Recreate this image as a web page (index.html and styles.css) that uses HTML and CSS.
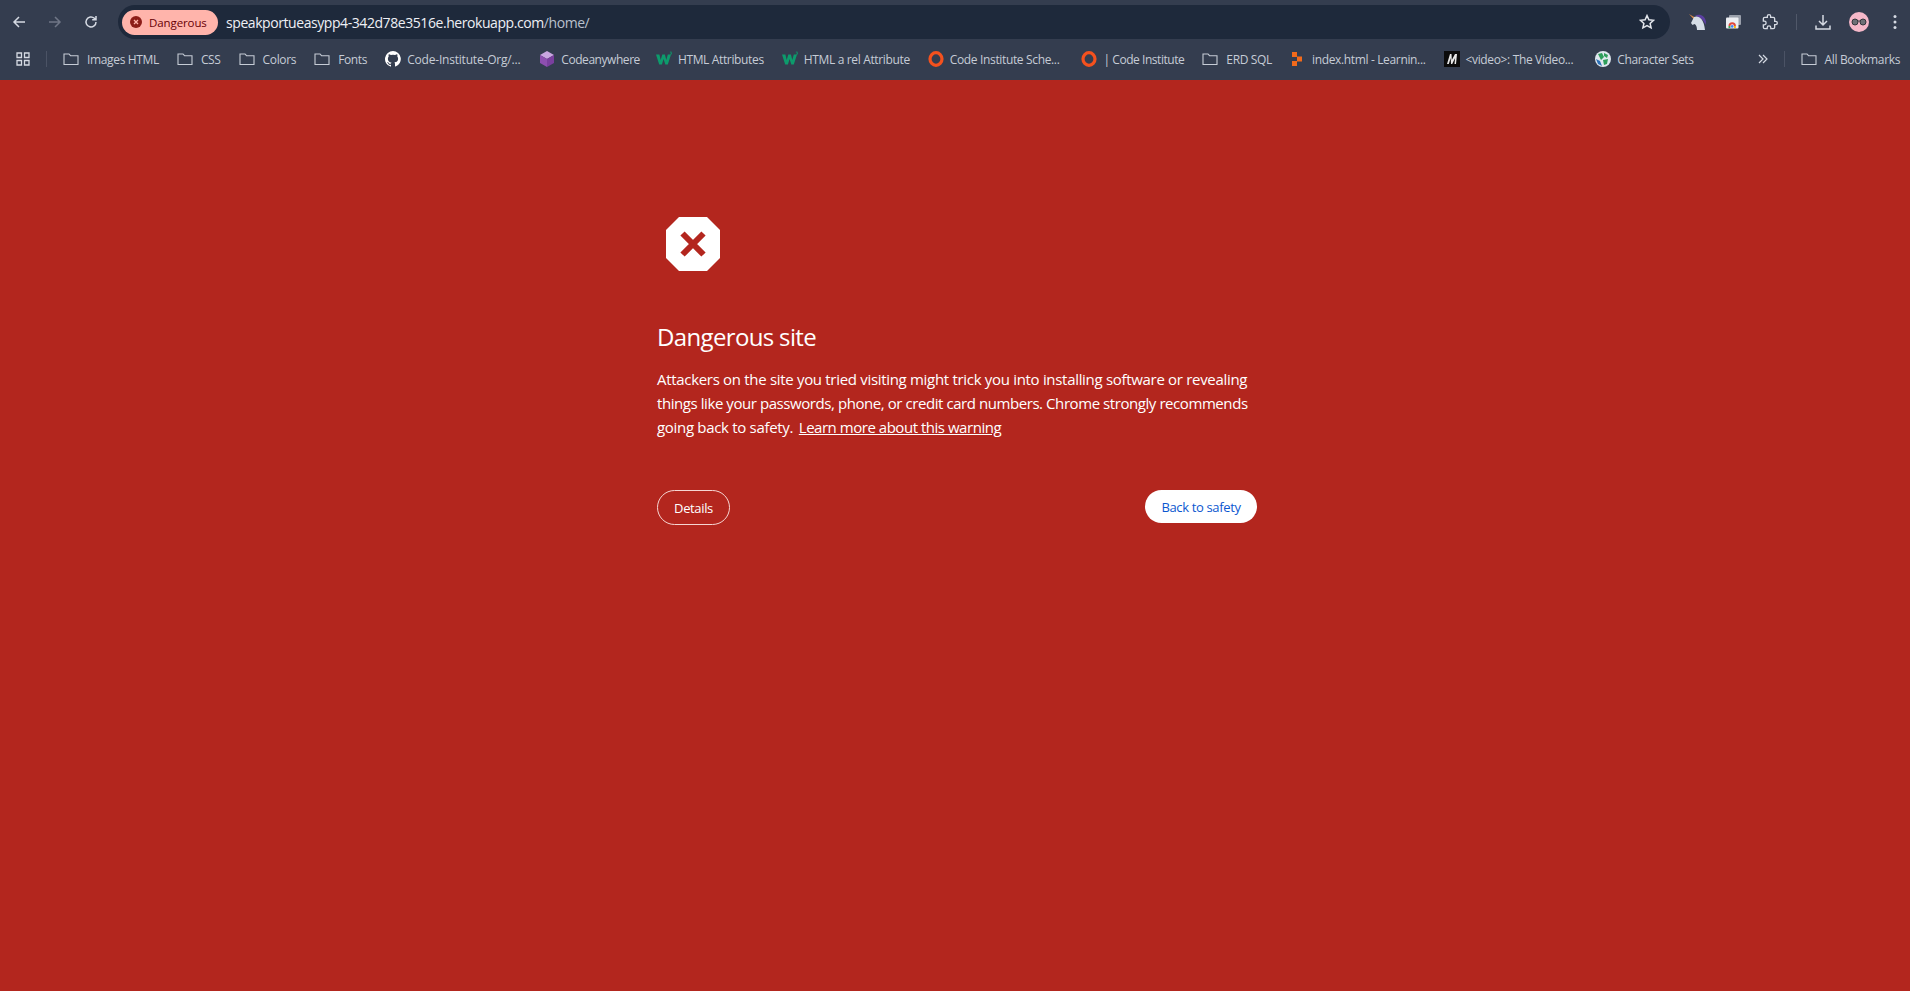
FILE: index.html

```html
<!DOCTYPE html>
<html lang="en">
<head>
    <meta charset="UTF-8">
    <meta name="viewport" content="width=device-width, initial-scale=1.0">
    <title>Security error</title>
    <link rel="stylesheet" href="styles.css">
</head>
<body>
    <header class="browser">
        <div class="toolbar">
            <svg class="nav-icon" viewBox="0 0 16 16"><path d="M14 8H3M8 3L3 8l5 5"/></svg>
            <svg class="nav-icon nav-off" viewBox="0 0 16 16"><path d="M2 8h11M8 3l5 5-5 5"/></svg>
            <svg class="nav-icon" viewBox="0 0 16 16"><path d="M13 8a5 5 0 1 1-1.600-3.700L13 5.800M13 2v3.800H9.200"/></svg>
            <div class="omnibox">
                <span class="danger-chip">
                    <svg class="chip-icon" viewBox="0 0 12 12"><circle cx="6" cy="6" r="6"/><path d="M4 4l4 4M8 4l-4 4"/></svg>
                    Dangerous
                </span>
                <span class="url">speakportueasypp4-342d78e3516e.herokuapp.com<span class="url-path">/home/</span></span>
                <svg class="star" viewBox="0 0 16 16"><path d="M8 1.600l1.900 4.200 4.600.5-3.400 3.100 1 4.500L8 11.600l-4.100 2.300 1-4.500-3.400-3.100 4.600-.5z"/></svg>
            </div>
            <div class="ext-icons">
                <svg class="ext ext-unicorn" viewBox="0 0 17 17"><path class="uni-horn" d="M0 1l6 3.500-1.500 1.500z"/><path class="uni-mane" d="M6 3C10 .5 16 2 17 9l-.5 3C15 7 11 4 6 3z"/><path class="uni-head" d="M5 4c4-2 10 1 11 13H8c0-3-1-5.500-2.500-6l-2 1L2 10z"/></svg>
                <svg class="ext ext-tab" viewBox="0 0 15 15"><rect class="tab-back" x="3" y="1" width="12" height="10" rx="1"/><rect class="tab-front" x="0" y="3.500" width="12.500" height="11" rx="1"/><path class="c-red" d="M2.500 12a3.700 3.700 0 0 1 7.400 0H8a1.800 1.800 0 0 0-3.600 0z"/><path class="c-green" d="M2.500 12h1.900v2H2.500z"/><path class="c-yellow" d="M8 12h1.900v2H8z"/><circle class="c-blue" cx="6.200" cy="12.400" r="1.300"/></svg>
                <svg class="nav-icon ext-puzzle" viewBox="0 0 24 24"><path d="M20.500 11H19V7c0-1.100-.9-2-2-2h-4V3.500C13 2.120 11.880 1 10.500 1S8 2.120 8 3.500V5H4c-1.100 0-1.990.9-1.990 2v3.800H3.500c1.490 0 2.700 1.210 2.700 2.700s-1.210 2.700-2.700 2.700H2V20c0 1.100.9 2 2 2h3.800v-1.500c0-1.490 1.210-2.700 2.700-2.700s2.700 1.210 2.700 2.700V22H17c1.100 0 2-.9 2-2v-4h1.500c1.380 0 2.500-1.120 2.500-2.500S21.880 11 20.500 11z"/></svg>
                <span class="sep"></span>
                <svg class="nav-icon ext-down" viewBox="0 0 16 16"><path d="M8 1v10M4 7l4 4 4-4M1 11.500V15h14v-3.500"/></svg>
                <svg class="avatar" viewBox="0 0 20 20"><circle class="av-face" cx="10" cy="10" r="10"/><circle class="av-lens" cx="6" cy="10" r="3"/><circle class="av-lens" cx="14" cy="10" r="3"/><path class="av-bridge" d="M9 9h2"/></svg>
                <svg class="menu-dots" viewBox="0 0 4 16"><circle cx="2" cy="2.500" r="1.500"/><circle cx="2" cy="8" r="1.500"/><circle cx="2" cy="13.500" r="1.500"/></svg>
            </div>
        </div>
        <nav class="bookmarks">
            <svg class="apps" viewBox="0 0 14 14"><path d="M1 1h4.500v4.500H1zM8.500 1H13v4.500H8.500zM1 8.500h4.500V13H1zM8.500 8.500H13V13H8.500z"/></svg>
            <span class="bar-sep"></span>
            <a class="mark folder-mark"><svg class="folder" viewBox="0 0 16 14"><path d="M1 12.500V2h5l1.500 1.700H15v8.800z"/></svg>Images HTML</a>
            <a class="mark folder-mark"><svg class="folder" viewBox="0 0 16 14"><path d="M1 12.500V2h5l1.500 1.700H15v8.800z"/></svg>CSS</a>
            <a class="mark folder-mark"><svg class="folder" viewBox="0 0 16 14"><path d="M1 12.500V2h5l1.500 1.700H15v8.800z"/></svg>Colors</a>
            <a class="mark folder-mark"><svg class="folder" viewBox="0 0 16 14"><path d="M1 12.500V2h5l1.500 1.700H15v8.800z"/></svg>Fonts</a>
            <a class="mark mark-github"><svg class="fav" viewBox="0 0 16 16"><path class="gh" d="M8 0a8 8 0 0 0-2.500 15.600c.4.100.5-.2.500-.4v-1.400c-2.200.5-2.700-1-2.700-1-.4-.9-.9-1.200-.9-1.200-.7-.5.100-.5.100-.5.800.1 1.200.8 1.200.8.700 1.200 1.900.9 2.300.7.100-.5.300-.9.500-1.100-1.800-.2-3.600-.9-3.600-4 0-.9.300-1.600.8-2.100-.1-.2-.4-1 .1-2.100 0 0 .7-.2 2.200.8a7.600 7.600 0 0 1 4 0c1.500-1 2.200-.8 2.200-.8.400 1.100.2 1.900.1 2.100.5.600.8 1.300.8 2.100 0 3.100-1.900 3.700-3.700 3.900.3.300.6.800.6 1.500v2.200c0 .2.100.5.600.4A8 8 0 0 0 8 0z"/></svg>Code-Institute-Org/...</a>
            <a class="mark mark-narrow mark-close"><svg class="fav" viewBox="0 0 16 16"><path class="cube-top" d="M8 0l7 4-7 4-7-4z"/><path class="cube-left" d="M1 4l7 4v8l-7-4z"/><path class="cube-right" d="M15 4l-7 4v8l7-4z"/></svg>Codeanywhere</a>
            <a class="mark"><svg class="fav" viewBox="0 0 16 16"><path class="w3" d="M0 3.500h3.400l1.300 5.500 1.600-5.500h2.600l1.400 5.500 1.500-5.500H15l-3.200 10H9.300L7.600 8l-1.700 5.500H3.200z"/><path class="w3-mark" d="M13.800 1h1.700l-.8 1h.8v1.200h-1.700"/></svg>HTML Attributes</a>
            <a class="mark"><svg class="fav" viewBox="0 0 16 16"><path class="w3" d="M0 3.500h3.400l1.300 5.500 1.600-5.500h2.600l1.400 5.500 1.500-5.500H15l-3.200 10H9.300L7.600 8l-1.700 5.500H3.200z"/><path class="w3-mark" d="M13.800 1h1.700l-.8 1h.8v1.200h-1.700"/></svg>HTML a rel Attribute</a>
            <a class="mark mark-wide"><svg class="fav" viewBox="0 0 16 16"><ellipse class="ci" cx="8" cy="8" rx="6" ry="6.300"/></svg>Code Institute Sche...</a>
            <a class="mark mark-narrow"><svg class="fav" viewBox="0 0 16 16"><ellipse class="ci" cx="8" cy="8" rx="6" ry="6.300"/></svg>| Code Institute</a>
            <a class="mark folder-mark"><svg class="folder" viewBox="0 0 16 14"><path d="M1 12.500V2h5l1.500 1.700H15v8.800z"/></svg>ERD SQL</a>
            <a class="mark"><svg class="fav" viewBox="0 0 16 16"><path class="mdn" d="M2 1h5v5H2zM7 5.500h5v5H7zM2 10h5v5H2z"/></svg>index.html - Learnin...</a>
            <a class="mark mark-wide"><svg class="fav" viewBox="0 0 16 16"><rect class="mdn-bg" width="16" height="16"/><path class="mdn-m" d="M3 13L6 3h1.500l.3 6L11 3h2l-1 10h-1.500l.6-6-2.900 6H7l-.3-6-1.900 6z"/></svg>&lt;video&gt;: The Video...</a>
            <a class="mark"><svg class="fav" viewBox="0 0 16 16"><circle class="globe" cx="8" cy="8" r="8"/><path class="globe-land" d="M3 3l4-1 2 4-3 3zM9 2l4 2-1 3-3-2zM8 9l5-1-1 5-3 1z"/><path class="globe-sea" d="M1 8l4 2 2 5-4-2z"/></svg>Character Sets</a>
            <svg class="chevrons" viewBox="0 0 10 10"><path d="M1 1l4 4-4 4M5 1l4 4-4 4"/></svg>
            <span class="bar-sep"></span>
            <a class="mark all-marks"><svg class="folder" viewBox="0 0 16 14"><path d="M1 12.500V2h5l1.500 1.700H15v8.800z"/></svg>All Bookmarks</a>
        </nav>
    </header>

    <main class="interstitial">
        <svg class="stop-icon" viewBox="0 0 54 54"><path class="stop-shape" d="M13 0h28l13 13v28L41 54H13L0 41V13z"/><path class="stop-x" d="M16.500 16.500l21 21M37.500 16.500l-21 21"/></svg>
        <h1>Dangerous site</h1>
        <p>
            <span class="line line-first">Attackers on the site you tried visiting might trick you into installing software or revealing</span>
            <span class="line line-second">things like your passwords, phone, or credit card numbers. Chrome strongly recommends</span>
            <span class="line line-first">going back to safety. <a href="#" class="learn">Learn more about this warning</a></span>
        </p>
        <div class="actions">
            <button class="btn-details">Details</button>
            <button class="btn-back">Back to safety</button>
        </div>
    </main>
</body>
</html>
```

FILE: styles.css

```css
* {
    box-sizing: border-box;
}
html, body {
    height: 100%;
}
body {
    margin: 0;
    background-color: #b3261e;
    color: white;
    font-family: "Open Sans", "Noto Sans", sans-serif;
    overflow: hidden;
}
svg {
    flex: none;
    display: block;
}

/* browser chrome */
.browser {
    height: 80px;
    background-color: #343d4f;
    display: flex;
    flex-direction: column;
}
.toolbar {
    height: 44px;
    padding: 5px 0 0 11px;
    display: flex;
    align-items: flex-start;
}
.nav-icon {
    width: 16px;
    height: 16px;
    margin: 9px 20px 0 0;
    fill: none;
    stroke: #d5dae3;
    stroke-width: 1.500;
}
.nav-off {
    stroke: #6f7686;
}
.omnibox {
    width: 1552px;
    height: 34px;
    margin-left: -1px;
    padding: 0 15px 0 4px;
    border-radius: 17px;
    background-color: #1e293b;
    display: flex;
    align-items: center;
}
.danger-chip {
    width: 96px;
    height: 25px;
    border-radius: 12.500px;
    background-color: #ffb4ab;
    color: #690005;
    font-size: 11.500px;
    letter-spacing: -0.100px;
    padding-left: 8px;
    display: flex;
    align-items: center;
    gap: 7px;
}
.chip-icon {
    width: 12px;
    height: 12px;
    fill: #8c1d18;
    stroke: #ffb4ab;
    stroke-width: 1.300;
}
.chip-icon circle {
    stroke: none;
}
.url {
    margin-left: 8px;
    flex: 1;
    font-size: 14px;
    letter-spacing: -0.430px;
    color: #eef0f5;
}
.url-path {
    color: #b9c0cd;
}
.star {
    width: 16px;
    height: 16px;
    fill: none;
    stroke: #e3e6ec;
    stroke-width: 1.500;
}
.ext-icons {
    margin-left: 19px;
    display: flex;
    align-items: flex-start;
}
.ext {
    margin-top: 8px;
}
.ext-unicorn {
    width: 17px;
    height: 17px;
    margin-right: 20px;
}
.ext-tab {
    width: 15px;
    height: 15px;
    margin-top: 9px;
    margin-right: 21px;
}
.ext-puzzle {
    stroke-width: 2;
    margin-right: 18px;
}
.ext-down {
    margin-right: 18px;
}
.uni-horn { fill: #d98a4a; }
.uni-mane { fill: #5b3fa0; }
.uni-head { fill: #d5dde6; }
.tab-back { fill: #9aa0ab; }
.tab-front { fill: #eceef2; }
.c-red { fill: #e0483c; }
.c-green { fill: #34a853; }
.c-yellow { fill: #fbbc05; }
.c-blue { fill: #4285f4; }
.sep {
    width: 1px;
    height: 16px;
    margin: 9px 18px 0 0;
    background-color: #505869;
}
.avatar {
    width: 20px;
    height: 20px;
    margin: 7px 24px 0 0;
}
.av-face { fill: #f5b8c9; }
.av-lens {
    fill: #6d7076;
    stroke: #33363c;
    stroke-width: 1;
}
.av-bridge {
    fill: none;
    stroke: #33363c;
    stroke-width: 1;
}
.menu-dots {
    width: 4px;
    height: 16px;
    margin-top: 9px;
    fill: #d5dae3;
}

/* bookmarks bar */
.bookmarks {
    height: 36px;
    padding: 0 0 6px 16px;
    display: flex;
    align-items: center;
    font-size: 12px;
    letter-spacing: -0.350px;
    color: #c6ccd6;
    white-space: nowrap;
}
.apps {
    width: 14px;
    height: 14px;
    fill: none;
    stroke: #d5dae3;
    stroke-width: 1.300;
}
.bar-sep {
    width: 1px;
    height: 16px;
    margin: 0 16px;
    background-color: #4b5365;
}
.mark {
    display: flex;
    align-items: center;
    gap: 6px;
    margin-right: 18px;
}
.folder-mark {
    gap: 8px;
}
.mark-github {
    margin-right: 19px;
    letter-spacing: -0.200px;
}
.mark-narrow {
    letter-spacing: -0.450px;
}
.mark-close {
    margin-right: 16px;
}
.mark-wide {
    margin-right: 22px;
}
.folder {
    width: 16px;
    height: 14px;
    fill: none;
    stroke: #c6ccd6;
    stroke-width: 1.100;
}
.fav {
    width: 16px;
    height: 16px;
}
.gh { fill: #ffffff; }
.cube-top { fill: #c9a6e0; }
.cube-left { fill: #8e4fb0; }
.cube-right { fill: #7a3f9e; }
.w3 { fill: #0d9b6c; }
.w3-mark {
    fill: none;
    stroke: #0d9b6c;
    stroke-width: 0.700;
}
.ci {
    fill: none;
    stroke: #f4511e;
    stroke-width: 3.200;
}
.mdn { fill: #f26a1b; }
.mdn-bg { fill: #0b0b0b; }
.mdn-m { fill: #e8e8e8; }
.globe { fill: #dfe7ee; }
.globe-land { fill: #2e9e5b; }
.globe-sea { fill: #2a6fb5; }
.chevrons {
    width: 10px;
    height: 10px;
    margin-left: 46px;
    fill: none;
    stroke: #d5dae3;
    stroke-width: 1.200;
}
.all-marks {
    margin-right: 0;
    gap: 8px;
}

/* warning page */
.interstitial {
    width: 604px;
    margin-left: 657px;
    padding-top: 137px;
}
.stop-icon {
    width: 54px;
    height: 54px;
    margin-left: 9px;
}
.stop-shape {
    fill: white;
}
.stop-x {
    fill: none;
    stroke: #b3261e;
    stroke-width: 6;
}
h1 {
    margin: 50px 0 0;
    font-size: 24px;
    line-height: 32px;
    font-weight: 400;
    letter-spacing: -0.650px;
}
p {
    margin: 14px 0 0;
    font-size: 15px;
    line-height: 24px;
    letter-spacing: -0.470px;
}
.line {
    display: block;
    white-space: nowrap;
}
.line-first {
    letter-spacing: -0.310px;
}
.line-second {
    letter-spacing: -0.430px;
}
.learn {
    color: white;
    margin-left: 2px;
    letter-spacing: -0.470px;
}
.actions {
    width: 600px;
    margin-top: 51px;
    display: flex;
    justify-content: space-between;
    align-items: flex-start;
}
button {
    font-family: inherit;
    font-size: 13px;
    letter-spacing: -0.350px;
    cursor: pointer;
}
.btn-details {
    width: 73px;
    height: 35px;
    background-color: transparent;
    color: white;
    border: 1px solid #f6d5d2;
    border-radius: 18px;
}
.btn-back {
    width: 112px;
    height: 33px;
    background-color: white;
    color: #0b57d0;
    border: none;
    border-radius: 17px;
}
```
